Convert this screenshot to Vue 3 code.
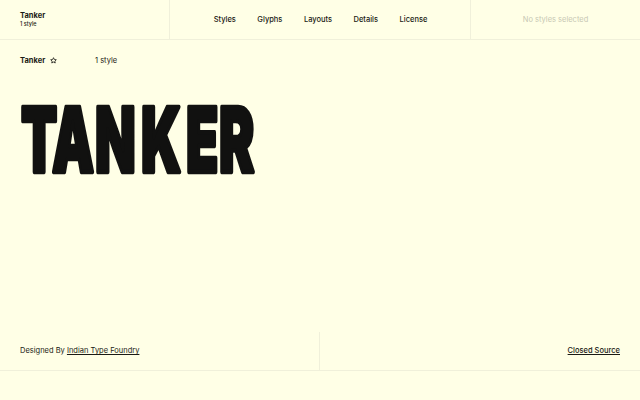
<template>
  <div class="page">
    <header class="top">
      <div class="brand">
        <strong>Tanker</strong>
        <small>1 style</small>
      </div>
      <nav class="nav">
        <a v-for="item in nav" :key="item">{{ item }}</a>
      </nav>
      <div class="selected">No styles selected</div>
    </header>
    <section class="meta">
      <div class="name">
        <strong>Tanker</strong>
        <svg class="star" viewBox="0 0 12 12" width="7" height="7" aria-hidden="true">
          <path d="M6 1.2l1.45 3.1 3.35.4-2.5 2.3.68 3.3L6 8.65 3.02 10.3l.68-3.3-2.5-2.3 3.35-.4z" fill="none" stroke="#1a1a14" stroke-width="1.4" stroke-linejoin="round" />
        </svg>
      </div>
      <span>1 style</span>
    </section>
    <svg class="display" viewBox="0 0 640 100" width="640" height="100" role="img">
      <text :x="letterX" y="81" transform="scale(0.595 1)">TANKER</text>
    </svg>
    <div class="spacer"></div>
    <footer class="bottom">
      <div class="credit">Designed By <a>Indian Type Foundry</a></div>
      <div class="source"><a>Closed Source</a></div>
    </footer>
  </div>
</template>

<script setup>
const nav = ['Styles', 'Glyphs', 'Layouts', 'Details', 'License']
const letterX = [21, 52, 95, 141, 186, 219].map((x) => x / 0.595).join(' ')
</script>

<style>
html, body { margin: 0; background: #ffffe6; }
</style>

<style scoped>
.page {
  width: 640px;
  height: 400px;
  overflow: hidden;
  background: #ffffe6;
  color: #1a1a14;
  font-family: Inter, "Liberation Sans", sans-serif;
  font-size: 7.5px;
  font-weight: 400;
  line-height: 1;
  display: flex;
  flex-direction: column;
}
.top {
  height: 40px;
  box-sizing: border-box;
  flex: none;
  display: grid;
  grid-template-columns: 170px 301px 169px;
  border-bottom: 1px solid #f0f0da;
}
.brand {
  padding-left: 20px;
  display: flex;
  flex-direction: column;
  justify-content: center;
  gap: 2px;
  border-right: 1px solid #f0f0da;
}
.brand strong { font-weight: 700; }
.brand small { font-size: 5.5px; font-weight: 500; }
.nav {
  display: flex;
  align-items: center;
  justify-content: center;
  gap: 21.5px;
  padding-left: 1px;
  font-weight: 500;
  border-right: 1px solid #f0f0da;
}
.selected {
  display: flex;
  align-items: center;
  justify-content: center;
  color: #c8c8b4;
}
.meta {
  flex: none;
  height: 41px;
  padding-left: 20px;
  display: flex;
  align-items: center;
  color: #1a1a14;
}
.name {
  width: 75px;
  display: flex;
  align-items: center;
  gap: 5px;
}
.name strong { font-weight: 700; }
.display {
  flex: none;
  display: block;
  margin-top: 10px;
  overflow: visible;
}
.display text {
  font-family: Inter, "Liberation Sans", sans-serif;
  font-size: 89px;
  font-weight: 900;
  fill: #111110;
  stroke: #111110;
  stroke-width: 3.5px;
  stroke-linejoin: round;
  vector-effect: non-scaling-stroke;
}
.spacer { flex: 1; }
.bottom {
  flex: none;
  height: 39px;
  margin-bottom: 29px;
  box-sizing: border-box;
  display: grid;
  grid-template-columns: 320px 320px;
  border-bottom: 1px solid #f0f0da;
}
.credit, .source {
  display: flex;
  align-items: center;
  white-space: pre;
}
.credit { padding-left: 20px; border-right: 1px solid #f0f0da; }
.source { justify-content: flex-end; padding-right: 20px; font-weight: 500; }
a { color: inherit; }
.bottom a { text-decoration: underline; text-underline-offset: 1px; }
</style>
